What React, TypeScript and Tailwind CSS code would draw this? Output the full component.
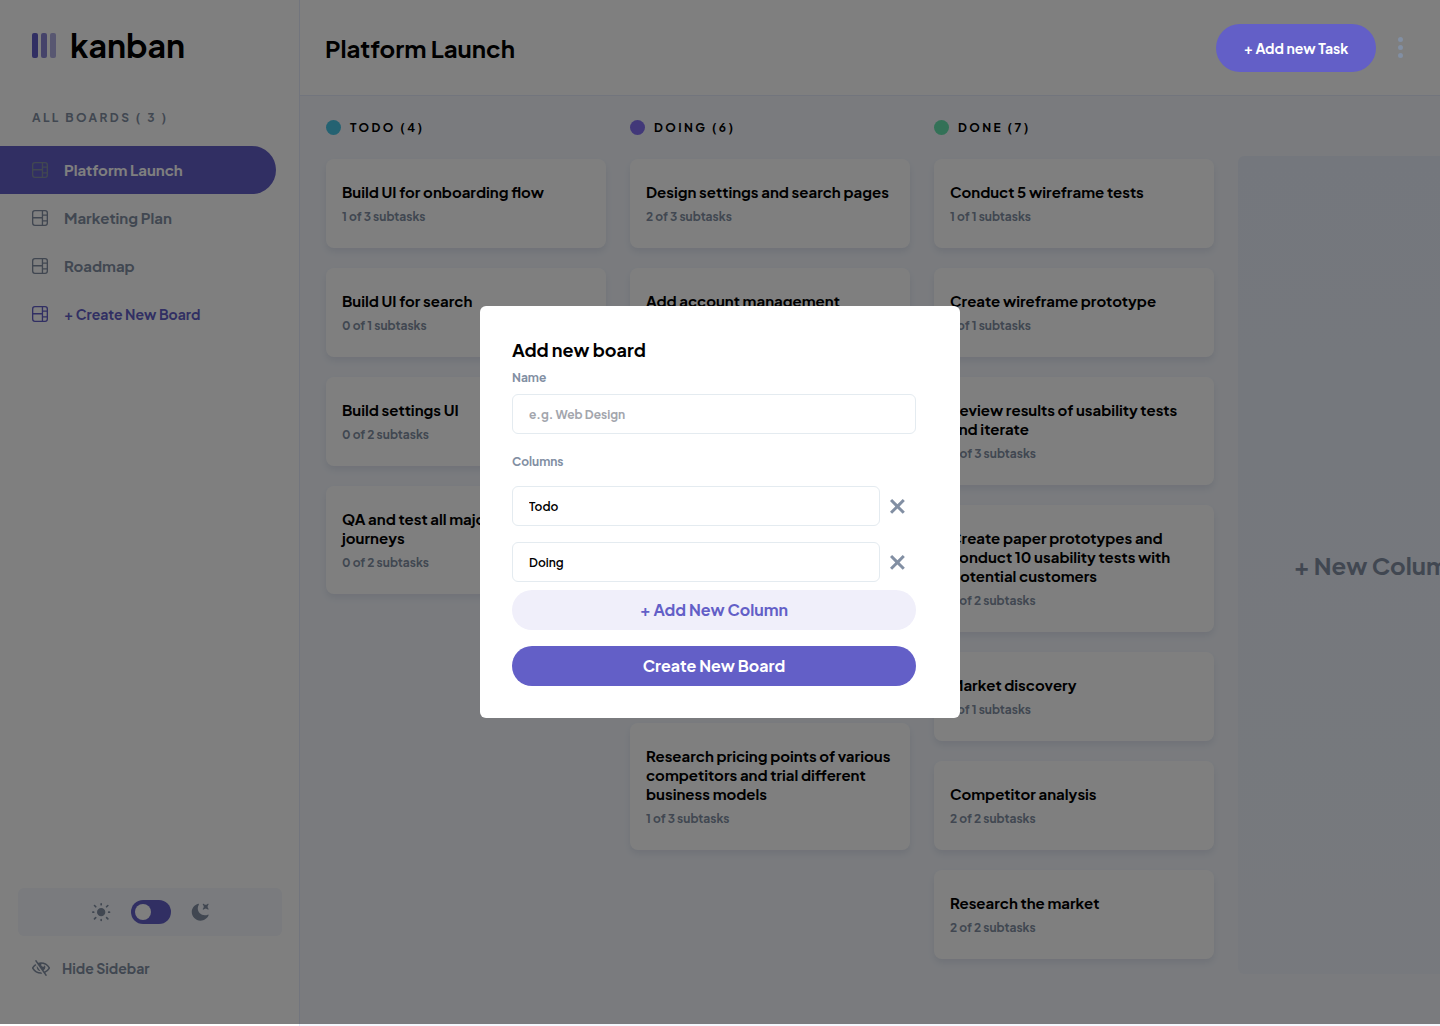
import React from "react";

const boards = ["Platform Launch", "Marketing Plan", "Roadmap"];

type Task = { title: string; subtasks: string };
type Column = { name: string; dot: string; tasks: Task[] };

const columns: Column[] = [
  {
    name: "TODO (4)",
    dot: "bg-[#49c4e5]",
    tasks: [
      { title: "Build UI for onboarding flow", subtasks: "1 of 3 subtasks" },
      { title: "Build UI for search", subtasks: "0 of 1 subtasks" },
      { title: "Build settings UI", subtasks: "0 of 2 subtasks" },
      { title: "QA and test all major user journeys", subtasks: "0 of 2 subtasks" },
    ],
  },
  {
    name: "DOING (6)",
    dot: "bg-[#8471f2]",
    tasks: [
      { title: "Design settings and search pages", subtasks: "2 of 3 subtasks" },
      { title: "Add account management endpoints", subtasks: "2 of 3 subtasks" },
      { title: "Design onboarding flow", subtasks: "1 of 3 subtasks" },
      { title: "Add search endpoints", subtasks: "1 of 2 subtasks" },
      { title: "Add auth endpoints", subtasks: "1 of 2 subtasks" },
      {
        title: "Research pricing points of various competitors and trial different business models",
        subtasks: "1 of 3 subtasks",
      },
    ],
  },
  {
    name: "DONE (7)",
    dot: "bg-[#67e2ae]",
    tasks: [
      { title: "Conduct 5 wireframe tests", subtasks: "1 of 1 subtasks" },
      { title: "Create wireframe prototype", subtasks: "1 of 1 subtasks" },
      { title: "Review results of usability tests and iterate", subtasks: "3 of 3 subtasks" },
      {
        title: "Create paper prototypes and conduct 10 usability tests with potential customers",
        subtasks: "2 of 2 subtasks",
      },
      { title: "Market discovery", subtasks: "1 of 1 subtasks" },
      { title: "Competitor analysis", subtasks: "2 of 2 subtasks" },
      { title: "Research the market", subtasks: "2 of 2 subtasks" },
    ],
  },
];

function BoardIcon() {
  return (
    <svg width="16" height="16" viewBox="0 0 16 16" fill="currentColor" aria-hidden="true">
      <path d="M0 2.889A2.889 2.889 0 0 1 2.889 0H13.11A2.889 2.889 0 0 1 16 2.889V13.11A2.888 2.888 0 0 1 13.111 16H2.89A2.889 2.889 0 0 1 0 13.111V2.89Zm1.333 5.555v4.667c0 .859.697 1.556 1.556 1.556h6.889V8.444H1.333Zm8.445-1.333V1.333h-6.89A1.556 1.556 0 0 0 1.334 2.89V7.11h8.445Zm4.889-1.333H11.11v4.444h3.556V5.778Zm0 5.778H11.11v3.11h2a1.556 1.556 0 0 0 1.556-1.555v-1.555Zm0-7.112V2.89a1.555 1.555 0 0 0-1.556-1.556h-2v3.111h3.556Z" />
    </svg>
  );
}

function SunIcon() {
  return (
    <svg width="19" height="19" viewBox="0 0 19 19" fill="#828fa3" aria-hidden="true">
      <path d="M9.167 15.833a.833.833 0 0 1 .833.834v.833a.833.833 0 0 1-1.667 0v-.833a.833.833 0 0 1 .834-.834ZM3.75 13.75a.833.833 0 0 1 .59 1.422l-1.25 1.25a.833.833 0 0 1-1.18-1.178l1.25-1.25a.833.833 0 0 1 .59-.244Zm10.833 0c.221 0 .433.088.59.244l1.25 1.25a.833.833 0 0 1-1.179 1.178l-1.25-1.25a.833.833 0 0 1 .59-1.422ZM9.167 5a4.167 4.167 0 1 1 0 8.334 4.167 4.167 0 0 1 0-8.334Zm-7.5 3.333a.833.833 0 0 1 0 1.667H.833a.833.833 0 1 1 0-1.667h.834Zm15.833 0a.833.833 0 0 1 0 1.667h-.833a.833.833 0 0 1 0-1.667h.833Zm-1.667-6.666a.833.833 0 0 1 .59 1.422l-1.25 1.25a.833.833 0 1 1-1.179-1.178l1.25-1.25a.833.833 0 0 1 .59-.244Zm-13.333 0c.221 0 .433.088.59.244l1.25 1.25a.833.833 0 0 1-1.18 1.178L1.91 3.09a.833.833 0 0 1 .59-1.422ZM9.167 0A.833.833 0 0 1 10 .833v.834a.833.833 0 1 1-1.667 0V.833A.833.833 0 0 1 9.167 0Z" />
    </svg>
  );
}

function MoonIcon() {
  return (
    <svg width="18" height="18" viewBox="0 0 16 16" fill="#828fa3" aria-hidden="true">
      <path d="M6.474.682c.434-.11.718.406.481.78A6.067 6.067 0 0 0 6.01 4.72c0 3.418 2.827 6.187 6.314 6.187.89.002 1.77-.182 2.584-.54.408-.18.894.165.724.57-1.16 2.775-3.944 4.73-7.194 4.73-4.292 0-7.771-3.41-7.771-7.615 0-3.541 2.466-6.518 5.807-7.37Zm8.433.07c.442-.294.969.232.674.674l-.525.787a1.943 1.943 0 0 0 0 2.157l.525.788c.295.441-.232.968-.674.673l-.787-.525a1.943 1.943 0 0 0-2.157 0l-.786.525c-.442.295-.97-.232-.675-.673l.525-.788a1.943 1.943 0 0 0 0-2.157l-.525-.787c-.295-.442.232-.968.674-.673l.787.525a1.943 1.943 0 0 0 2.157 0l.787-.525Z" />
    </svg>
  );
}

function HideIcon() {
  return (
    <svg width="18" height="16" viewBox="0 0 18 16" fill="#828fa3" aria-hidden="true">
      <path d="M8.522 11.223a4.252 4.252 0 0 1-3.654-5.22l3.654 5.22ZM9 12.25A8.685 8.685 0 0 1 1.5 8a8.612 8.612 0 0 1 2.76-2.864l-.86-1.23A10.112 10.112 0 0 0 .208 7.238a1.5 1.5 0 0 0 0 1.524A10.187 10.187 0 0 0 9 13.75c.414 0 .828-.025 1.239-.074l-1-1.43A8.88 8.88 0 0 1 9 12.25Zm8.792-3.488a10.14 10.14 0 0 1-4.486 4.046l1.504 2.148a.375.375 0 0 1-.092.523l-.648.453a.375.375 0 0 1-.523-.092L3.19 1.044A.375.375 0 0 1 3.282.52L3.93.068a.375.375 0 0 1 .523.092l1.735 2.479A10.308 10.308 0 0 1 9 2.25c3.746 0 7.031 2 8.792 4.988a1.5 1.5 0 0 1 0 1.524ZM16.5 8a8.674 8.674 0 0 0-6.755-4.219A1.75 1.75 0 1 0 12.75 5v-.001a4.25 4.25 0 0 1-1.154 5.366l.834 1.192A8.641 8.641 0 0 0 16.5 8Z" />
    </svg>
  );
}

function CrossIcon() {
  return (
    <svg width="15" height="15" viewBox="0 0 15 15" fill="#828fa3" aria-hidden="true">
      <path d="m12.728 0 2.122 2.122L9.546 7.425l5.304 5.303-2.122 2.122-5.303-5.304-5.303 5.304L0 12.728l5.303-5.303L0 2.122 2.122 0l5.303 5.303z" />
    </svg>
  );
}

function Sidebar() {
  return (
    <aside className="flex w-[300px] shrink-0 flex-col border-r border-[#e4ebfa] bg-white pb-[46px]">
      <div className="flex h-24 items-center gap-3.5 px-8 pb-1.5">
        <svg width="24" height="25" viewBox="0 0 24 25" fill="#635fc7" aria-hidden="true">
          <rect width="6" height="25" rx="2" />
          <rect opacity=".75" x="9" width="6" height="25" rx="2" />
          <rect opacity=".5" x="18" width="6" height="25" rx="2" />
        </svg>
        <span className="text-[32px] leading-10 font-bold text-black">kanban</span>
      </div>
      <h2 className="mt-3 px-8 text-xs leading-5 font-bold tracking-[2.4px] text-[#828fa3]">
        ALL BOARDS ( 3 )
      </h2>
      <nav className="mt-[18px] flex flex-col pr-[23px] text-[15px] font-bold text-[#828fa3]">
        {boards.map((name, i) => (
          <a
            key={name}
            href="#"
            className={
              i === 0
                ? "flex h-12 items-center gap-4 rounded-r-full bg-[#635fc7] px-8"
                : "flex h-12 items-center gap-4 rounded-r-full px-8"
            }
          >
            <BoardIcon />
            <span className={i === 0 ? "text-white" : ""}>{name}</span>
          </a>
        ))}
        <button className="flex h-12 items-center gap-4 px-8 text-sm font-bold text-[#635fc7]">
          <BoardIcon />
          <span>+ Create New Board</span>
        </button>
      </nav>
      <div className="mt-auto mr-[17px] ml-[18px] flex h-12 items-center justify-center gap-5 rounded-md bg-[#f4f7fd]">
        <SunIcon />
        <label className="flex h-6 w-10 cursor-pointer items-center rounded-full bg-[#635fc7] px-1">
          <input type="checkbox" aria-label="Dark theme" className="size-4 appearance-none rounded-full bg-white" />
        </label>
        <MoonIcon />
      </div>
      <button className="mt-5 flex h-6 items-center gap-3 px-8 text-sm font-bold text-[#828fa3]">
        <HideIcon />
        Hide Sidebar
      </button>
    </aside>
  );
}

function Header() {
  return (
    <header className="flex h-24 items-center justify-between border-b border-[#e4ebfa] bg-white pr-8 pl-[25px]">
      <h1 className="text-2xl font-bold text-black">Platform Launch</h1>
      <div className="flex items-center gap-4">
        <button className="relative z-20 h-12 w-40 rounded-full bg-[#635fc7] text-sm font-bold text-white">
          + Add new Task
        </button>
        <button aria-label="Board options" className="relative z-20 flex h-6 w-4 flex-col items-center justify-center gap-[3px]">
          <span className="size-[5px] rounded-full bg-[#828fa3]" />
          <span className="size-[5px] rounded-full bg-[#828fa3]" />
          <span className="size-[5px] rounded-full bg-[#828fa3]" />
        </button>
      </div>
    </header>
  );
}

function BoardColumn({ column }: { column: Column }) {
  return (
    <section className="w-[280px] shrink-0">
      <h2 className="flex h-[15px] items-center gap-[9px] text-xs font-bold tracking-[2.4px] text-black">
        <span className={`size-[15px] rounded-full ${column.dot}`} />
        {column.name}
      </h2>
      <ul className="mt-6 flex flex-col gap-5">
        {column.tasks.map((task) => (
          <li
            key={task.title}
            className="rounded-lg bg-white px-4 pt-[23px] pb-6 shadow-[0_4px_6px_rgba(54,78,126,0.1)]"
          >
            <h3 className="text-[15px] leading-[19px] font-bold text-black">{task.title}</h3>
            <p className="mt-[9px] text-xs leading-[14px] font-bold text-[#828fa3]">{task.subtasks}</p>
          </li>
        ))}
      </ul>
    </section>
  );
}

const field =
  "h-10 min-w-0 flex-1 rounded-md border border-[#e4ebf0] px-4 text-xs font-semibold text-black placeholder:font-bold placeholder:text-[#a3a6ad]";

function AddBoardDialog() {
  return (
    <div className="absolute inset-x-0 top-0 bottom-0.5 z-10 flex items-center justify-center bg-black/50">
      <form
        role="dialog"
        aria-labelledby="dialog-title"
        className="flex w-[480px] flex-col rounded-md bg-white py-8 pr-11 pl-8"
      >
        <h2 id="dialog-title" className="text-lg leading-6 font-bold text-black">
          Add new board
        </h2>
        <label htmlFor="board-name" className="mt-1.5 text-xs leading-5 font-bold text-[#828fa3]">
          Name
        </label>
        <div className="mt-1.5 flex">
          <input id="board-name" placeholder="e.g. Web Design" className={field} />
        </div>
        <fieldset className="mt-[18px]">
          <legend className="text-xs leading-5 font-bold text-[#828fa3]">Columns</legend>
          <div className="mt-3.5 flex flex-col gap-4">
            {["Todo", "Doing"].map((name) => (
              <div key={name} className="flex items-center gap-2.5">
                <input aria-label={`${name} column`} defaultValue={name} className={field} />
                <button type="button" aria-label={`Remove ${name}`} className="flex w-[26px]">
                  <CrossIcon />
                </button>
              </div>
            ))}
          </div>
        </fieldset>
        <button type="button" className="mt-2 h-10 rounded-full bg-[#f0effa] text-base font-bold text-[#635fc7]">
          + Add New Column
        </button>
        <button type="button" className="mt-4 h-10 rounded-full bg-[#635fc7] text-base font-bold text-white">
          Create New Board
        </button>
      </form>
    </div>
  );
}

export default function App() {
  return (
    <div
      className="relative flex min-h-screen overflow-hidden bg-[#f4f7fd]"
      style={{ fontFamily: '"Plus Jakarta Sans", Inter, sans-serif' }}
    >
      <Sidebar />
      <div className="flex min-w-0 flex-1 flex-col">
        <Header />
        <main className="flex min-w-0 flex-1 gap-6 overflow-hidden pt-6 pb-[52px] pl-[26px]">
          {columns.map((column) => (
            <BoardColumn key={column.name} column={column} />
          ))}
          <button className="mt-9 w-[280px] shrink-0 rounded-md bg-linear-to-b from-[#e9effa] to-[#e9effa]/50 text-2xl font-bold text-[#828fa3]">
            + New Column
          </button>
        </main>
      </div>
      <AddBoardDialog />
    </div>
  );
}
